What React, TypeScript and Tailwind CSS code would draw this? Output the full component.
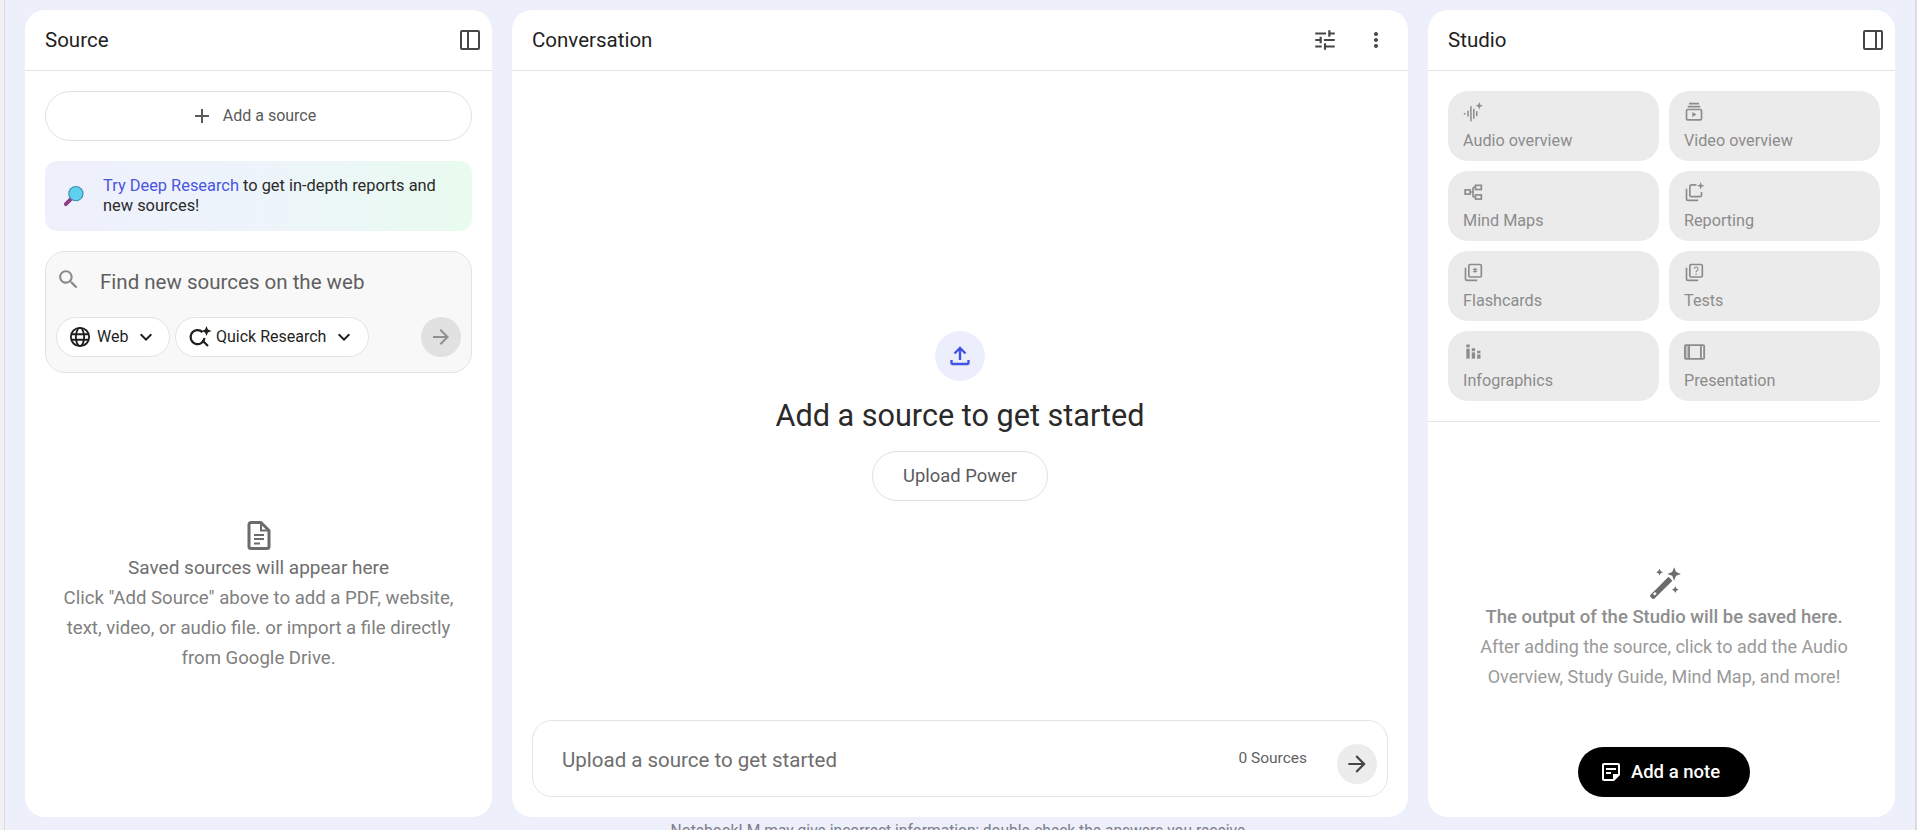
import React from "react";

const P = ({ d, className, fill = "currentColor" }: { d: string; className?: string; fill?: string }) => (
  <svg viewBox="0 0 24 24" className={className} fill={fill}>
    <path d={d} />
  </svg>
);

const arrow = "M12 4l-1.41 1.41L16.17 11H4v2h12.17l-5.58 5.59L12 20l8-8z";
const chevron = "M16.59 8.59L12 13.17 7.41 8.59 6 10l6 6 6-6z";

const Header = ({ title, children }: { title: string; children: React.ReactNode }) => (
  <div className="h-[61px] shrink-0 flex items-center justify-between pl-5 pr-3 border-b border-[#e3e3e3]">
    <span className="text-[20.5px] text-[#1f1f1f]">{title}</span>
    {children}
  </div>
);

const Audio = () => (
  <svg viewBox="0 0 24 24" className="w-5 h-5" fill="none" stroke="currentColor" strokeWidth="1.8">
    <path d="M1 14h2M6 10.500v7M9.500 5v18M13 8v12M16.500 11v6" />
    <path d="M19.500 0l1.200 3.300L24 4.500l-3.300 1.200L19.500 9l-1.200-3.300L15 4.500l3.300-1.200z" fill="currentColor" stroke="none" />
  </svg>
);
const Video = () => (
  <svg viewBox="0 0 24 24" className="w-5 h-5" fill="none" stroke="currentColor" strokeWidth="2">
    <path d="M6 2h12M4.500 5.500h15" />
    <rect x="3" y="9" width="18" height="12.500" rx="1.500" />
    <path d="M10 12l5 3-5 3z" fill="currentColor" stroke="none" />
  </svg>
);
const Mind = () => (
  <svg viewBox="0 0 24 24" className="w-5 h-5" fill="none" stroke="currentColor" strokeWidth="2">
    <rect x="2.500" y="9.500" width="6" height="5" />
    <rect x="15" y="4" width="7" height="5" />
    <rect x="15" y="15.500" width="7" height="5" />
    <path d="M8.500 12H12M12 6.500h3M12 18h3M12 6.500V18" />
  </svg>
);
const Report = () => (
  <svg viewBox="0 0 24 24" className="w-5 h-5" fill="none" stroke="currentColor" strokeWidth="2">
    <path d="M3 8v12a2 2 0 0 0 2 2h12" />
    <path d="M15 3.500H9A2 2 0 0 0 7 5.500v10a2 2 0 0 0 2 2h10a2 2 0 0 0 2-2V12" />
    <path d="M20 0l1.200 3.300L24.500 4.500l-3.300 1.200L20 9l-1.200-3.300-3.300-1.200 3.300-1.200z" fill="currentColor" stroke="none" />
  </svg>
);
const Flash = () => (
  <svg viewBox="0 0 24 24" className="w-5 h-5" fill="none" stroke="currentColor" strokeWidth="2">
    <rect x="7" y="3" width="15" height="15" rx="1.500" />
    <path d="M3 7v13a2 2 0 0 0 2 2h12" />
    <path d="M14.500 7v6M12 8.500l5 3M17 8.500l-5 3" strokeWidth="1.500" />
  </svg>
);
const Test = () => (
  <svg viewBox="0 0 24 24" className="w-5 h-5" fill="none" stroke="currentColor" strokeWidth="2">
    <rect x="7" y="3" width="15" height="15" rx="1.500" />
    <path d="M3 7v13a2 2 0 0 0 2 2h12" />
    <path d="M12.300 8.200a2.300 2.300 0 1 1 3.200 2.200c-.8.400-1 .8-1 1.800" strokeWidth="1.400" />
    <circle cx="14.500" cy="14.800" r=".9" fill="currentColor" stroke="none" />
  </svg>
);
const Info = () => (
  <svg viewBox="0 0 24 24" className="w-5 h-5" fill="currentColor">
    <rect x="4" y="3" width="4" height="3.500" />
    <rect x="4" y="8" width="4" height="12" />
    <rect x="10.500" y="7.500" width="4" height="3.500" />
    <rect x="10.500" y="12.500" width="4" height="7.500" />
    <rect x="17" y="10.500" width="4" height="3" />
    <rect x="17" y="15" width="4" height="5" />
  </svg>
);
const Present = () => (
  <svg viewBox="0 0 24 24" className="w-5 h-5 scale-110 origin-left" fill="none" stroke="currentColor" strokeWidth="2">
    <rect x="1" y="4.500" width="21" height="15" rx="1" />
    <rect x="1" y="4.500" width="4.500" height="15" fill="currentColor" fillOpacity="0.45" stroke="none" />
    <path d="M5.500 4.500v15M18.500 4.500v15" />
  </svg>
);

const cards: [string, React.ReactNode][] = [
  ["Audio overview", <Audio />],
  ["Video overview", <Video />],
  ["Mind Maps", <Mind />],
  ["Reporting", <Report />],
  ["Flashcards", <Flash />],
  ["Tests", <Test />],
  ["Infographics", <Info />],
  ["Presentation", <Present />],
];

export default function App() {
  return (
    <div
      className="w-[1917px] h-[830px] overflow-hidden bg-[#edeffa] flex text-[#444746]"
      style={{ fontFamily: '"Roboto", "Open Sans", sans-serif' }}
    >
      <div className="w-[5px] shrink-0 bg-[#f1f1f1] border-r border-[#dcdcdc]" />
      <div className="flex-1 flex flex-col pt-[10px] pl-5 pr-5">
        <div className="flex gap-5 h-[807px] shrink-0">
          {/* Source */}
          <section className="w-[467px] shrink-0 bg-white rounded-[20px] flex flex-col overflow-hidden">
            <Header title="Source">
              <svg viewBox="0 0 20 20" className="w-5 h-5 text-[#444746]" fill="none" stroke="currentColor" strokeWidth="2">
                <rect x="1" y="1" width="18" height="18" rx="1" />
                <path d="M8 1v18" />
              </svg>
            </Header>
            <div className="flex-1 flex flex-col px-5 pt-[20px]">
              <button className="h-[50px] rounded-[25px] border border-[#e0e0e0] flex items-center justify-center gap-[9px] pr-[11px] text-[16px] text-[#5a5a5a]">
                <P d="M19 13h-6v6h-2v-6H5v-2h6V5h2v6h6v2z" className="w-6 h-6" />
                Add a source
              </button>
              <div className="mt-5 h-[70px] rounded-xl bg-gradient-to-r from-[#eef0fc] via-[#edf4fb] to-[#e9fbee] flex items-center pl-[17px] pr-[20px] text-[16.4px] leading-5 text-[#2a2a2a]">
                <svg viewBox="0 0 24 24" className="w-[23px] h-[23px] shrink-0 mr-[18px]">
                  <path d="M10 14L4 20" stroke="#8c3c86" strokeWidth="4" strokeLinecap="round" />
                  <circle cx="14.500" cy="9" r="8" fill="#3e8fb0" />
                  <circle cx="14.500" cy="9" r="6.800" fill="#5fd0ee" />
                </svg>
                <p>
                  <span className="text-[#4a55e0]">Try Deep Research</span> to get in-depth reports and new sources!
                </p>
              </div>
              <div className="mt-5 h-[122px] rounded-[20px] border border-[#e3e3e3] bg-[#f8f8f8] flex flex-col pl-[10px] pr-[10px]">
                <div className="flex items-center h-[60px] shrink-0 text-[#5f5f5f]">
                  <P d="M15.500 14h-.79l-.28-.27C15.410 12.590 16 11.110 16 9.500 16 5.910 13.090 3 9.500 3S3 5.910 3 9.500 5.910 16 9.500 16c1.610 0 3.090-.59 4.230-1.570l.27.28v.79l5 4.990L20.490 19l-4.990-5zm-6 0C7.010 14 5 11.990 5 9.500S7.010 5 9.500 5 14 7.010 14 9.500 11.990 14 9.500 14z" className="w-[25px] h-[25px] text-[#8a8a8a] mb-[5px]" />
                  <span className="ml-[19px] text-[20.5px]">Find new sources on the web</span>
                </div>
                <div className="flex items-center mt-[5px]">
                  <div className="h-10 w-[114px] rounded-[20px] border border-[#e3e3e3] bg-white flex items-center pl-[12px] gap-[6px] text-[16px] text-[#1f1f1f]">
                    <svg viewBox="0 0 24 24" className="w-[22px] h-[22px]" fill="none" stroke="#1f1f1f" strokeWidth="2">
                      <circle cx="12" cy="12" r="10" />
                      <ellipse cx="12" cy="12" rx="4.500" ry="10" />
                      <path d="M2.500 9h19M2.500 15h19" />
                    </svg>
                    Web
                    <P d={chevron} className="w-6 h-6" />
                  </div>
                  <div className="ml-[5px] h-10 w-[194px] rounded-[20px] border border-[#e3e3e3] bg-white flex items-center pl-[12px] gap-[4px] text-[16px] text-[#1f1f1f]">
                    <svg viewBox="0 0 24 24" className="w-[24px] h-[24px]" fill="none" stroke="#1f1f1f" strokeWidth="2.200">
                      <path d="M14.500 7.200A7 7 0 1 0 16.500 13" />
                      <path d="M14.500 15.500l5.500 5.500" />
                      <path d="M18.500 1l1.400 3.600 3.600 1.400-3.600 1.400-1.400 3.600-1.400-3.600L13.500 6l3.600-1.400z" fill="#1f1f1f" stroke="none" />
                    </svg>
                    Quick Research
                    <P d={chevron} className="w-6 h-6 ml-[2px]" />
                  </div>
                  <div className="ml-auto w-10 h-10 rounded-full bg-[#e1e1e1] flex items-center justify-center">
                    <P d={arrow} className="w-6 h-6 text-[#8f8f8f]" />
                  </div>
                </div>
              </div>
              <div className="flex-1 flex flex-col items-center justify-center pt-[4px] text-center text-[18.6px] leading-[30px] text-[#808080]">
                <svg viewBox="0 0 24 29" className="w-[24px] h-[29px] text-[#6c6c6c]" fill="none" stroke="currentColor" strokeWidth="3">
                  <path d="M2 3.500A2 2 0 0 1 4 1.500h10L22 9.500v16a2 2 0 0 1-2 2H4a2 2 0 0 1-2-2z" strokeLinejoin="round" />
                  <path d="M14 1.500V9.500h8" strokeWidth="2" />
                  <path d="M7 14h10M7 18h10M7 22.500h6" strokeWidth="2" />
                </svg>
                <p className="text-[#6e6e6e] text-[19px] leading-[30px] mt-[3px]">Saved sources will appear here</p>
                <p className="px-1">Click "Add Source" above to add a PDF, website, text, video, or audio file. or import a file directly from Google Drive.</p>
              </div>
            </div>
          </section>

          {/* Conversation */}
          <section className="w-[896px] shrink-0 bg-white rounded-[20px] flex flex-col overflow-hidden">
            <Header title="Conversation">
              <div className="flex items-center gap-[26px] text-[#444746] mr-[8px]">
                <P d="M3 17v2h6v-2H3zM3 5v2h10V5H3zm10 16v-2h8v-2h-8v-2h-2v6h2zM7 9v2H3v2h4v2h2V9H7zm14 4v-2H11v2h10zm-6-4h2V7h4V5h-4V3h-2v6z" className="w-[26px] h-[26px]" />
                <P d="M12 8c1.100 0 2-.9 2-2s-.9-2-2-2-2 .9-2 2 .9 2 2 2zm0 2c-1.100 0-2 .9-2 2s.9 2 2 2 2-.9 2-2-.9-2-2-2zm0 6c-1.100 0-2 .9-2 2s.9 2 2 2 2-.9 2-2-.9-2-2-2z" className="w-6 h-6" />
              </div>
            </Header>
            <div className="flex-1 flex flex-col items-center pt-[260px]">
              <div className="w-[50px] h-[50px] rounded-full bg-[#eceefc] flex items-center justify-center">
                <svg viewBox="0 0 24 24" className="w-6 h-6" fill="none" stroke="#4353e8" strokeWidth="2.400">
                  <path d="M12 16V4.500M6.500 9.500L12 4l5.500 5.500" />
                  <path d="M3.500 16v2.500A1.500 1.500 0 0 0 5 20h14a1.500 1.500 0 0 0 1.500-1.500V16" />
                </svg>
              </div>
              <h2 className="mt-[15px] text-[30.6px] leading-[40px] text-[#2a2a2a]">Add a source to get started</h2>
              <button className="mt-[15px] w-[176px] h-[50px] rounded-[25px] border border-[#e0e0e0] text-[18.4px] text-[#5a5a5a]">Upload Power</button>
            </div>
            <div className="mx-5 mb-5 h-[77px] rounded-[20px] border border-[#e3e3e3] flex items-center pl-[29px] pr-[10px]">
              <span className="text-[20.5px] text-[#6e6e6e] mt-[3px]">Upload a source to get started</span>
              <span className="ml-auto mr-[30px] text-[15.5px] text-[#5f5f5f]">0 Sources</span>
              <div className="w-10 h-10 rounded-full bg-[#ececec] flex items-center justify-center mt-[10px]">
                <P d={arrow} className="w-[26px] h-[26px] text-[#444746]" />
              </div>
            </div>
          </section>

          {/* Studio */}
          <section className="w-[467px] shrink-0 bg-white rounded-[20px] flex flex-col overflow-hidden">
            <Header title="Studio">
              <svg viewBox="0 0 20 20" className="w-5 h-5 text-[#444746]" fill="none" stroke="currentColor" strokeWidth="2">
                <rect x="1" y="1" width="18" height="18" rx="1" />
                <path d="M13 1v18" />
              </svg>
            </Header>
            <div className="pl-5 pr-[15px] pt-[20px]">
              <div className="grid grid-cols-2 gap-[10px]">
                {cards.map(([label, icon]) => (
                  <div key={label} className="h-[70px] rounded-[20px] bg-[#ebebeb] pl-[15px] pt-[10px] text-[#8c8c8c]">
                    <div className="h-[22px] flex items-center">{icon}</div>
                    <div className="mt-[8px] text-[16.2px] leading-5">{label}</div>
                  </div>
                ))}
              </div>
            </div>
            <div className="mt-5 mr-[15px] border-t border-[#e3e3e3]" />
            <div className="flex-1 flex flex-col items-center pl-[5px] pt-[144px] text-center text-[18px] leading-[30px] text-[#9a9a9a]">
              <svg viewBox="0 0 32 32" className="w-[36px] h-[36px] text-[#6c6c6c]" fill="currentColor">
                <path d="M20 9.500l3.500 3.500L8 28.500a2 2 0 0 1-3 0l-.5-.5a2 2 0 0 1 0-3z" />
                <path d="M9.500 24.500l-1.500-1.500-1.800 1.800 1.500 1.500z" fill="#fff" />
                <path d="M25 1l1.700 4.300L31 7l-4.300 1.700L25 13l-1.700-4.300L19 7l4.300-1.700z" />
                <path d="M12 2.500l1 2 2 1-2 1-1 2-1-2-2-1 2-1zM26 18l1 2 2 1-2 1-1 2-1-2-2-1 2-1z" />
              </svg>
              <p className="text-[#8e8e8e] text-[18.5px] font-medium">The output of the Studio will be saved here.</p>
              <p className="px-10">After adding the source, click to add the Audio Overview, Study Guide, Mind Map, and more!</p>
              <button className="mt-[55px] w-[172px] h-[50px] rounded-[25px] bg-black text-white flex items-center justify-center gap-[8px] pr-[9px] text-[18.5px] font-medium">
                <P d="M19 3H4.990C3.890 3 3 3.900 3 5l.01 14c0 1.100.89 2 1.990 2h10l6-6V5c0-1.100-.9-2-2-2zM5 19V5h14v9h-5v5H5zm7-5H7v-2h5v2zm5-4H7V8h10v2z" className="w-6 h-6" />
                Add a note
              </button>
            </div>
          </section>
        </div>
        <div className="mt-[4px] text-center text-[15.6px] leading-5 text-[#7b7f8a]">NotebookLM may give incorrect information; double-check the answers you receive.</div>
      </div>
      <div className="w-[2px] shrink-0 bg-[#dcdcdc]" />
    </div>
  );
}
